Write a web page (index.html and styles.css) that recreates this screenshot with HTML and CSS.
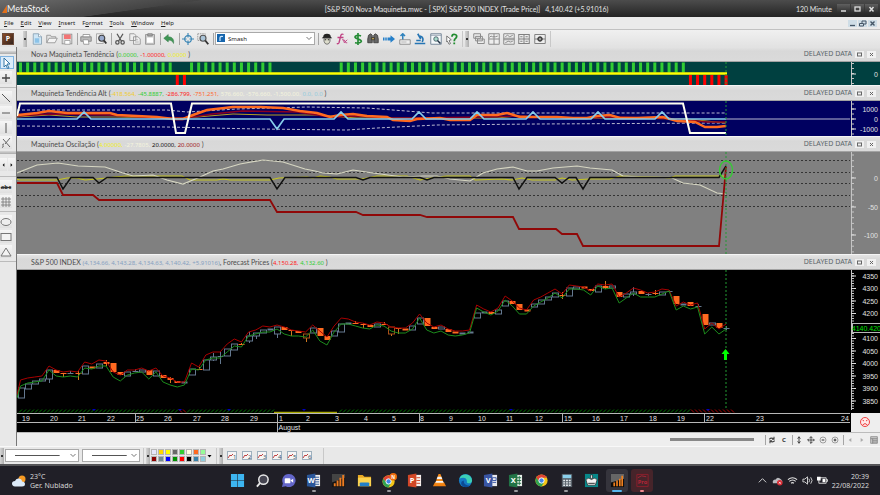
FILE: index.html
```html
<!DOCTYPE html>
<html lang="en">

<head>
    <meta charset="utf-8">
    <title>MetaStock</title>
    <link rel="stylesheet" href="styles.css">
</head>

<body>
    <header class="titlebar">
        <div class="brand">
            <svg width="5" height="8" viewBox="0 0 5 8"><path d="M0 8L5 0V8Z" fill="#e0701c"/></svg>
            <span>MetaStock</span>
        </div>
        <div class="doc-title"><span>[S&amp;P 500 Nova Maquineta.mwc - [.SPX] S&amp;P 500 INDEX (Trade Price)]</span><span>4,140.42 (+5.91016)</span></div>
        <span class="period">120 Minute</span>
        <div class="win-buttons">
            <button aria-label="Minimize"><svg viewBox="0 0 13 8"><path d="M4 6h5" stroke="#ddd" stroke-width="1.5"/></svg></button>
            <button aria-label="Maximize"><svg viewBox="0 0 13 8"><rect x="4" y="2" width="5" height="4" fill="none" stroke="#ddd" stroke-width="1.3"/></svg></button>
            <button aria-label="Close"><svg viewBox="0 0 13 8"><path d="M4.500 2l4 4.500M8.500 2l-4 4.500" stroke="#ddd" stroke-width="1.5"/></svg></button>
        </div>
    </header>

    <nav class="menubar">
        <a href="#"><u>F</u>ile</a>
        <a href="#"><u>E</u>dit</a>
        <a href="#"><u>V</u>iew</a>
        <a href="#"><u>I</u>nsert</a>
        <a href="#">F<u>o</u>rmat</a>
        <a href="#"><u>T</u>ools</a>
        <a href="#"><u>W</u>indow</a>
        <a href="#"><u>H</u>elp</a>
        <div class="mdi-buttons">
            <button aria-label="Minimize chart"><svg viewBox="0 0 9 7"><path d="M2 5.500h5" stroke="#456" stroke-width="1.300"/></svg></button>
            <button aria-label="Restore chart"><svg viewBox="0 0 9 7"><path d="M4 3V1h4v3H6M1.500 3.500h4v2.500h-4z" fill="none" stroke="#456"/></svg></button>
            <button aria-label="Close chart"><svg viewBox="0 0 9 7"><path d="M2.500 1.500l4 4M6.500 1.500l-4 4" stroke="#456" stroke-width="1.400"/></svg></button>
        </div>
    </nav>

    <div class="toolbar">
        <button class="power" aria-label="Power Console">P</button>
        <span class="grip"></span>
        <button aria-label="New"><svg viewBox="0 0 16 16"><path d="M3 1h7l4 4v10H3z" fill="#cfe6f5" stroke="#7d98ab"/><path d="M10 1v4h4" fill="#fff" stroke="#7d98ab"/><path d="M5 7h6v6H5z" fill="#8cc3e8"/></svg></button>
        <button aria-label="Open"><svg viewBox="0 0 16 16"><path d="M1 13V3h5l1 2h6v2" fill="#e5e5e5" stroke="#888"/><path d="M1 13l3-6h11l-3 6z" fill="#f4f4f4" stroke="#888"/></svg></button>
        <button aria-label="Save"><svg viewBox="0 0 16 16"><rect x="1.500" y="1.500" width="13" height="13" fill="#ddd" stroke="#888"/><path d="M4 2h9v6H4z" fill="#f27474"/><path d="M5 10h7v5H5z" fill="#fff" stroke="#999"/></svg></button>
        <span class="sep"></span>
        <button aria-label="Print"><svg viewBox="0 0 16 16"><path d="M1 5h14v6H1z" fill="#bbb" stroke="#777"/><path d="M4 2h9v3H4zM4 9h7l1 6H5z" fill="#fff" stroke="#888"/></svg></button>
        <button aria-label="Print preview"><svg viewBox="0 0 16 16"><path d="M2 1h9v13H2z" fill="#eee" stroke="#999"/><circle cx="9" cy="7" r="4" fill="#9ac" stroke="#444" stroke-width="1.500"/><path d="M12 10l3 4" stroke="#333" stroke-width="2.500"/></svg></button>
        <span class="sep"></span>
        <button aria-label="Cut"><svg viewBox="0 0 16 16" fill="none" stroke="#555" stroke-width="1.700"><path d="M4 1l6 10M12 1L6 11"/><circle cx="4.500" cy="12.500" r="2.200"/><circle cx="11.500" cy="12.500" r="2.200"/></svg></button>
        <button aria-label="Copy"><svg viewBox="0 0 16 16"><path d="M1 1h6l2 2v7H1zM6 5h6l3 3v7H6z" fill="#eee" stroke="#888"/><path d="M8 9h4M8 12h5" stroke="#aaa"/></svg></button>
        <button aria-label="Paste"><svg viewBox="0 0 16 16"><path d="M2 2h12v13H2z" fill="#ccc" stroke="#888"/><path d="M5 1h6v3H5z" fill="#aaa" stroke="#777"/><path d="M4 6h8v7H4z" fill="#fff"/></svg></button>
        <span class="sep"></span>
        <button aria-label="Undo"><svg viewBox="0 0 16 16"><path d="M1 7l6-5v3c6 0 8 4 7 9-2-4-4-5-7-4v2z" fill="#3f9655" stroke="#2d7540" stroke-width=".600"/></svg></button>
        <span class="sep"></span>
        <button aria-label="Crosshair"><svg viewBox="0 0 16 16" fill="none" stroke="#3b86b5" stroke-width="1.500"><circle cx="8" cy="8" r="4.500"/><path d="M8 0v6M8 10v6M0 8h6M10 8h6"/></svg></button>
        <button aria-label="Zoom box"><svg viewBox="0 0 16 16"><path d="M1 1h10v9H1z" fill="none" stroke="#888" stroke-dasharray="2 1"/><circle cx="8" cy="7" r="4" fill="#aac4d8" stroke="#555" stroke-width="1.500"/><path d="M11 10l4 5" stroke="#333" stroke-width="2.500"/></svg></button>
        <span class="sep"></span>
        <div class="combo template">
            <svg class="template-icon" viewBox="0 0 8 8"><rect width="8" height="8" fill="#1766ad"/><path d="M3 7V4q0-2 3-1.500" fill="none" stroke="#cfe8ff" stroke-width="1.200"/></svg>
            <select aria-label="Template"><option>Smash</option></select>
            <svg class="chevron" viewBox="0 0 8 5"><path d="M1.500 1L4 3.500 6.500 1" fill="none" stroke="#777"/></svg>
        </div>
        <span class="sep"></span>
        <div class="tool-group">
            <button aria-label="Expert Advisor"><svg viewBox="0 0 16 16"><path d="M3 5q0-4 5-4t5 4l2 2H1z" fill="#222"/><path d="M4 7h8v4q-1 4-4 4t-4-4z" fill="#ddc" stroke="#555"/><path d="M5 9h2M9 9h2" stroke="#222" stroke-width="1.500"/></svg></button>
            <button aria-label="Indicator Builder"><svg viewBox="0 0 16 16" fill="none" stroke="#bf4283" stroke-width="1.800"><path d="M10 2Q7 0 6 5L4 13q-1 2-3 1M2 6h8"/><path d="M8 9h2l1 4 4-4M15 13h-2l-2-4" stroke-width="1.200"/></svg></button>
            <button aria-label="System Tester"><svg viewBox="0 0 16 16" fill="none" stroke="#248b34" stroke-width="2.200"><path d="M12 4Q8 2 5 4t3 4 4 4-8 1M8 0v16"/></svg></button>
            <button aria-label="Explorer"><svg viewBox="0 0 16 16" fill="#666" stroke="#333"><path d="M2 3l3-2 2 2v10H1V8zM14 3l-3-2-2 2v10h6V8z"/><path d="M6 6h4v3H6z" fill="#b59b50"/></svg></button>
            <button aria-label="Forecaster"><svg viewBox="0 0 16 16"><path d="M0 6h2v4H0zM3 6h2v4H3zM6 6h4V3l6 5-6 5v-3H6z" fill="#2680ca"/></svg></button>
            <button aria-label="Option Scope"><svg viewBox="0 0 16 16"><path d="M5 1v8M2 4l3-3 3 3" fill="none" stroke="#3183bd" stroke-width="2"/><path d="M1 9h14v6H1z" fill="#eee" stroke="#777"/><path d="M3 12h7" stroke="#aaa"/></svg></button>
            <button aria-label="Quote Center"><svg viewBox="0 0 16 16" fill="none" stroke="#2675b4" stroke-width="2.200"><path d="M5 1l4 7M8 4q6 2 3 8M1 14h14M3 10h6"/></svg></button>
            <button aria-label="Chart inspector"><svg viewBox="0 0 16 16"><path d="M1 1h14v14H1z" fill="#f5f9fb" stroke="#789" stroke-width="1.300"/><path d="M1 3h14" stroke="#789"/><circle cx="8" cy="8" r="3" fill="#adc" stroke="#345"/><path d="M10 10l4 4" stroke="#234" stroke-width="2"/></svg></button>
            <button aria-label="Context help"><svg viewBox="0 0 16 16"><path d="M1 4l6 5-3 1 2 4-2 1-2-4-1 1z" fill="#fff" stroke="#555"/><path d="M8 5q0-4 4-3t1 5q-2 1-2 4M11 12.500v2.500" fill="none" stroke="#218c30" stroke-width="2.400"/></svg></button>
        </div>
        <span class="sep wide"></span>
        <span class="grip"></span>
        <div class="tool-group layouts">
            <button aria-label="Cascade"><svg viewBox="0 0 16 16" fill="#eee" stroke="#8a8a8a" stroke-width="1.300"><path d="M1 1h9v6H1zM3.500 4.500h9v6h-9zM6 8h9v6H6z"/></svg></button>
            <button aria-label="Tile columns"><svg viewBox="0 0 16 16" fill="#eee" stroke="#8a8a8a" stroke-width="1.300"><path d="M1 1h14v14H1zM8 1v14M1 8h14M2 6l2-2 2 1 4 0 3-1"/></svg></button>
            <button aria-label="Tile rows"><svg viewBox="0 0 16 16" fill="#eee" stroke="#8a8a8a" stroke-width="1.300"><path d="M1 1h14v14H1zM1 7h14M1 9h14M3 5l3-2 3 2 4-2M3 13l4-2 3 1 3-1"/></svg></button>
            <button aria-label="Stack"><svg viewBox="0 0 16 16" fill="#eee" stroke="#808080" stroke-width="1.400"><path d="M1 2h14v12H1zM8 2v12M1 8h14M3 5h3M10 5h3M3 11h3M10 11h3"/></svg></button>
            <button aria-label="Layout options"><svg viewBox="0 0 16 16" fill="#eee" stroke="#808080" stroke-width="1.300"><path d="M1 2h14v12H1zM1 8h14"/><circle cx="8" cy="8" r="3" fill="#555" stroke="#333"/><circle cx="8" cy="8" r="1" fill="#fff" stroke="none"/></svg></button>
        </div>
        <span class="sep wide"></span>
    </div>

    <div class="workspace">
        <aside class="tools">
            <span class="hgrip"></span>
            <button class="selected" aria-label="Pointer"><svg viewBox="0 0 12 12"><path d="M3 1l6 6H6l2 4-1.500.500L5 8 3 10z" fill="#fff" stroke="#3476a5"/></svg></button>
            <button aria-label="Crosshair pointer"><svg viewBox="0 0 12 12"><path d="M6 2v8M2 6h8" stroke="#444" stroke-width="1.300"/></svg></button>
            <span class="hsep"></span>
            <button aria-label="Trendline"><svg viewBox="0 0 12 12"><path d="M2 2l8 8" stroke="#555"/></svg></button>
            <button aria-label="Horizontal line"><svg viewBox="0 0 12 12"><path d="M2 6h8" stroke="#555"/></svg></button>
            <button aria-label="Vertical line"><svg viewBox="0 0 12 12"><path d="M6 1v10" stroke="#555"/></svg></button>
            <button aria-label="Speed line"><svg viewBox="0 0 12 12"><path d="M3 2l7 8M10 1L5 7M4 7q-2 0-1 1.500t-1 2" fill="none" stroke="#666"/></svg></button>
            <span class="hgrip"></span>
            <div class="pager">
                <button aria-label="Previous"><svg viewBox="0 0 8 12"><path d="M5 4v4L3 6z"/></svg></button>
                <button aria-label="Next"><svg viewBox="0 0 8 12"><path d="M3 4v4l2-2z"/></svg></button>
            </div>
            <span class="hsep"></span>
            <button class="abc" aria-label="Text">abc</button>
            <button aria-label="Grid"><svg viewBox="0 0 12 12"><path d="M1 3h10M1 6h10M1 9h10M3 1v10M6 1v10M9 1v10" stroke="#777" stroke-width=".800"/></svg></button>
            <span class="hsep"></span>
            <button aria-label="Ellipse"><svg viewBox="0 0 12 12"><ellipse cx="6" cy="6" rx="5" ry="3.500" fill="#eee" stroke="#777"/></svg></button>
            <button aria-label="Rectangle"><svg viewBox="0 0 12 12"><rect x="1" y="2.500" width="10" height="7" fill="#f3f3f3" stroke="#777"/></svg></button>
            <button aria-label="Triangle"><svg viewBox="0 0 12 12"><path d="M6 2l5 8H1z" fill="#f3f3f3" stroke="#777"/></svg></button>
            <span class="hsep"></span>
        </aside>

        <main class="panes">
            <section class="pane">
                <div class="pane-head">
                    <h2>Nova Maquineta Tendência (<b class="lime">0.0000,</b> <b class="red">-1.00000,</b> <b class="yellow">0.0000</b> )</h2>
                    <span>DELAYED DATA</span>
                    <button aria-label="Maximize pane"><svg viewBox="0 0 9 7"><rect x="2.500" y="2" width="4" height="3" fill="none" stroke="#666"/></svg></button>
                    <button aria-label="Close pane"><svg viewBox="0 0 9 7"><path d="M3 2l3 3M6 2L3 5" stroke="#666"/></svg></button>
                </div>
                <div class="pane-body trend"><svg class="plot" id="trend"></svg><svg class="axis" id="trend-axis"></svg></div>
            </section>
            <section class="pane">
                <div class="pane-head">
                    <h2>Maquineta Tendência Alt (<b class="gold">-418.564,</b> <b class="lime">-45.8887,</b> <b class="red">-286.799,</b> <b class="orange">-751.251,</b> <b class="cream">576.660, -576.660, -1,500.00,</b> <b class="sky">0.0, 0.0</b> )</h2>
                    <span>DELAYED DATA</span>
                    <button aria-label="Maximize pane"><svg viewBox="0 0 9 7"><rect x="2.500" y="2" width="4" height="3" fill="none" stroke="#666"/></svg></button>
                    <button aria-label="Close pane"><svg viewBox="0 0 9 7"><path d="M3 2l3 3M6 2L3 5" stroke="#666"/></svg></button>
                </div>
                <div class="pane-body alt"><svg class="plot" id="alt"></svg><svg class="axis" id="alt-axis"></svg></div>
            </section>
            <section class="pane">
                <div class="pane-head">
                    <h2>Maquineta Oscilação (<b class="yellow">4.00000,</b> <b class="cream">-27.7805,</b> <b class="black">20.0000,</b> <b class="maroon">20.0000</b> )</h2>
                    <span>DELAYED DATA</span>
                    <button aria-label="Maximize pane"><svg viewBox="0 0 9 7"><rect x="2.500" y="2" width="4" height="3" fill="none" stroke="#666"/></svg></button>
                    <button aria-label="Close pane"><svg viewBox="0 0 9 7"><path d="M3 2l3 3M6 2L3 5" stroke="#666"/></svg></button>
                </div>
                <div class="pane-body osc"><svg class="plot" id="osc"></svg><svg class="axis" id="osc-axis"></svg></div>
            </section>
            <section class="pane">
                <div class="pane-head">
                    <h2>S&amp;P 500 INDEX <b class="steel">(4,134.66, 4,143.28, 4,134.63, 4,140.42, +5.91016)</b>, Forecast Prices (<b class="red">4,150.28,</b> <b class="lime">4,132.60</b> )</h2>
                    <span>DELAYED DATA</span>
                    <button aria-label="Maximize pane"><svg viewBox="0 0 9 7"><rect x="2.500" y="2" width="4" height="3" fill="none" stroke="#666"/></svg></button>
                    <button aria-label="Close pane"><svg viewBox="0 0 9 7"><path d="M3 2l3 3M6 2L3 5" stroke="#666"/></svg></button>
                </div>
                <div class="pane-body price"><svg class="plot" id="price"></svg><svg class="axis" id="price-axis"></svg></div>
            </section>
            <div class="scroll-row">
                <span class="thumb"></span>
                <span class="sep"></span>
                <button aria-label="Refresh"><svg viewBox="0 0 12 12" fill="none" stroke="#444" stroke-width="1.600"><path d="M2 5q2-3 7-1M10 7q-2 3-7 1"/><path d="M9 1v4H6M3 11V7h3"/></svg></button>
                <button aria-label="Reset">C</button>
                <span class="sep"></span>
                <button aria-label="Vertical scale"><svg viewBox="0 0 12 12" fill="none" stroke="#444" stroke-width="1.500"><path d="M6 2v8M4 4l2-3 2 3M4 8l2 3 2-3"/></svg></button>
                <button aria-label="Move"><svg viewBox="0 0 12 12" fill="none" stroke="#444" stroke-width="1.400"><path d="M6 1v10M1 6h10M4 3l2-2 2 2M4 9l2 2 2-2M3 4L1 6l2 2M9 4l2 2-2 2"/></svg></button>
                <button aria-label="Zoom out"><svg viewBox="0 0 12 12" fill="none" stroke="#777"><circle cx="6" cy="6" r="4.500"/><path d="M4 6h4" stroke="#333" stroke-width="1.500"/></svg></button>
                <button aria-label="Zoom in"><svg viewBox="0 0 12 12" fill="none" stroke="#777"><circle cx="6" cy="6" r="4.500"/><path d="M4 6h4M6 4v4" stroke="#333" stroke-width="1.500"/></svg></button>
                <span class="sep"></span>
                <button aria-label="Back"><svg viewBox="0 0 12 12"><path d="M8 3v6L4 6z" fill="#aaa"/></svg></button>
                <button aria-label="Forward"><svg viewBox="0 0 12 12"><path d="M4 3v6l4-3z" fill="#aaa"/></svg></button>
                <button aria-label="Data window"><svg viewBox="0 0 12 12"><path d="M1 1h10v10H1zM1 4h10M4 4v7M4 6.500h7M4 9h7" fill="#ccc" stroke="#777"/></svg></button>
            </div>
        </main>
    </div>

    <div class="bottombar">
        <span class="grip"></span>
        <div class="combo line-style"><select aria-label="Line style"><option></option></select><svg class="chevron" viewBox="0 0 8 5"><path d="M1.500 1L4 3.500 6.500 1" fill="none" stroke="#777"/></svg></div>
        <div class="combo line-weight"><select aria-label="Line weight"><option></option></select><svg class="chevron" viewBox="0 0 8 5"><path d="M1.500 1L4 3.500 6.500 1" fill="none" stroke="#777"/></svg></div>
        <span class="sep wide"></span>
        <span class="grip"></span>
        <div class="palette" id="palette"></div>
        <button class="more" aria-label="More colors"><svg viewBox="0 0 6 6"><path d="M1 2h4L3 4.500z"/></svg></button>
        <span class="sep wide"></span>
        <span class="grip"></span>
        <div class="templates" id="templates"></div>
        <span class="sep wide"></span>
    </div>

    <footer class="taskbar">
        <div class="weather">
            <svg width="14" height="12" viewBox="0 0 14 12"><circle cx="10" cy="4" r="3.500" fill="#f59a23"/><path d="M3 11.500q-3-.500-3-3t3-2.500q1-3 4-2.500t3 3q3 0 3 2.500t-3 2.500z" fill="#dceaf8"/></svg>
            <div><p>23°C</p><p>Ger. Nublado</p></div>
        </div>
        <div class="apps">
            <button aria-label="Start"><svg viewBox="0 0 16 16" fill="#3db5f0"><path d="M1 1h6.700v6.700H1zM8.300 1H15v6.700H8.300zM1 8.300h6.700V15H1zM8.300 8.300H15V15H8.300z"/></svg></button>
            <button aria-label="Search"><svg viewBox="0 0 16 16"><circle cx="9" cy="7" r="5" fill="#454450" stroke="#e8e8e8" stroke-width="1.600"/><path d="M5.500 10.500L2 14.500" stroke="#e8e8e8" stroke-width="2"/></svg></button>
            <button aria-label="Chat"><svg viewBox="0 0 16 16"><path d="M8 1a7 7 0 1 1-3 13l-4 1 1-4A7 7 0 0 1 8 1z" fill="#6366c9"/><rect x="4" y="5.500" width="6" height="5.500" rx="1" fill="#fff"/><path d="M10 8l3-2v4.500z" fill="#fff"/></svg></button>
            <button class="running" aria-label="Word"><svg viewBox="0 0 16 16"><rect x="7" y="2" width="8" height="12" fill="#eee"/><path d="M9 4.500h5M9 7h5M9 9.500h5M9 12h5" stroke="#2b579a"/><path d="M1 2l9-1.500v15L1 14z" fill="#2b579a"/><text x="5.500" y="11">W</text></svg></button>
            <button aria-label="MetaStock"><svg viewBox="0 0 16 16"><rect x="1" y="1" width="14" height="14" fill="#151515"/><path d="M1 1h14v4L1 10z" fill="#444"/><path d="M4 14v-3M7 14V8M10 14V5M13 14V2" stroke="#ee7b20" stroke-width="2"/></svg></button>
            <button aria-label="Explorer"><svg viewBox="0 0 16 16"><path d="M1 2h5l2 2h7v10H1z" fill="#e8a823"/><path d="M1 5h14v9H1z" fill="#fbd24f"/><path d="M3 14v-3q0-1 1-1h8q1 0 1 1v3z" fill="#2380c8"/></svg></button>
            <button class="running" aria-label="Chrome profile"><svg viewBox="0 0 16 16"><circle cx="7" cy="9" r="6.500" fill="#f3c518"/><path d="M1.400 6A6.500 6.500 0 0 1 12.700 6H7L5 11z" fill="#de4335"/><path d="M1.400 6A6.500 6.500 0 0 0 7 15.500L9.500 11 5 10.500z" fill="#31a352"/><circle cx="7" cy="9" r="2.800" fill="#4084e8" stroke="#fff"/><circle cx="12" cy="4" r="4" fill="#ee6c0d"/><text class="badge-letter" x="12" y="6">N</text></svg></button>
            <button aria-label="PowerPoint"><svg viewBox="0 0 16 16"><rect x="7" y="2" width="8" height="12" fill="#f5f0ee"/><path d="M10 5h4M10 8h4M10 11h4" stroke="#d24726"/><path d="M1 2l9-1.500v15L1 14z" fill="#d24726"/><text x="5.500" y="11">P</text></svg></button>
            <button aria-label="VLC"><svg viewBox="0 0 16 16"><path d="M1 14l2-4h10l2 4z" fill="#f08010"/><path d="M7 1h2l4 11H3z" fill="#f58a18"/><path d="M6 4h4l1 2.500H5zM4.400 8.500h7.200l.900 2H3.500z" fill="#f4f4f4"/></svg></button>
            <button aria-label="Edge"><svg viewBox="0 0 16 16"><circle cx="8" cy="8" r="7" fill="#1479c4"/><path d="M1.500 6A7 7 0 0 1 15 8q0 3-3.500 3-2.500 0-2-2.500Q9 5 5.500 5q-2.500 0-4 1z" fill="#3ccfb5"/><path d="M6 8q0 5 6.500 5.500Q8 17 4 13q-2-4 2-5z" fill="#0c4b95"/></svg></button>
            <button aria-label="Visio"><svg viewBox="0 0 16 16"><rect x="7" y="2" width="8" height="12" fill="#e8e8ee"/><path d="M10 5h4v3h-4zM10 10h4" fill="none" stroke="#3955a3"/><path d="M1 2l9-1.500v15L1 14z" fill="#3955a3"/><text x="5.500" y="11">V</text></svg></button>
            <button class="running" aria-label="Excel"><svg viewBox="0 0 16 16"><rect x="7" y="2" width="8" height="12" fill="#e8f0ea"/><path d="M9 5h5M9 8h5M9 11h5M12 3v10" stroke="#217346"/><path d="M1 2l9-1.500v15L1 14z" fill="#217346"/><text x="5.500" y="11">X</text></svg></button>
            <button aria-label="Chrome"><svg viewBox="0 0 16 16"><circle cx="8" cy="8" r="6.500" fill="#f3c518"/><path d="M2.400 5A6.500 6.500 0 0 1 13.700 5H8L6 10z" fill="#de4335"/><path d="M2.400 5A6.500 6.500 0 0 0 8 14.500L10.500 10 6 9.500z" fill="#31a352"/><circle cx="8" cy="8" r="2.800" fill="#4084e8" stroke="#fff"/></svg></button>
            <button class="running" aria-label="Calculator"><svg viewBox="0 0 16 16"><rect x="3" y="1" width="11" height="14" fill="#59626b"/><path d="M4 2h9v3.500H4z" fill="#8bd0ec"/><path d="M4.500 8h8M4.500 10.500h8M4.500 13h8" stroke="#e4e9ed" stroke-width="1.500" stroke-dasharray="2 1"/></svg></button>
            <button aria-label="Chess"><svg viewBox="0 0 16 16"><rect x="1" y="1" width="14" height="14" fill="#078789"/><path d="M4 13l-2-6Q5 4 8 7q3-3 6 0l-2 6zM7 2h2v4H7z" fill="#f2f2f2" stroke="#222" stroke-width=".700"/><path d="M4.500 11h7" stroke="#222"/></svg></button>
            <button class="active" aria-label="MetaStock chart"><svg viewBox="0 0 16 16"><rect x="1" y="1" width="14" height="14" fill="#0c0c0c"/><path d="M1 1h14v5L1 10z" fill="#666"/><path d="M4.500 14v-4M7.500 14V8M10.500 14V6M13 14V3" stroke="#f0801e" stroke-width="1.800"/></svg></button>
            <button class="alert" aria-label="Profit Pro"><svg viewBox="0 0 16 16"><path d="M2 1.500h12v13H2z" fill="none" stroke="#8d1f2c"/><path d="M3 5l4-2 5 1" fill="none" stroke="#a52535"/><text class="pro" x="8" y="12">Pro</text></svg></button>
        </div>
        <div class="tray">
            <svg viewBox="0 0 12 12"><path d="M2 8l4-4 4 4" fill="none" stroke="#ddd"/></svg>
            <svg viewBox="0 0 12 12"><path d="M1 9q-1-4 3-4 2-4 6 0 2 1 1 4z" fill="#b9b9bd"/><circle cx="8.500" cy="8.500" r="3" fill="#d92c35"/><path d="M7.500 7.500l2 2M9.500 7.500l-2 2" stroke="#fff" stroke-width=".800"/></svg>
            <svg viewBox="0 0 12 12" fill="none" stroke="#e5e5e5" stroke-width="1.200"><path d="M1 5q5-4 10 0M2.500 7q3.500-3 7 0M4.500 9q1.500-1.500 3 0"/></svg>
            <svg viewBox="0 0 12 12" fill="none" stroke="#ddd"><path d="M1 4.500h2l3-2.500v8L3 7.500H1zM7.500 4q1.500 2 0 4M9.500 2.500q3 3.500 0 7"/></svg>
            <svg viewBox="0 0 12 12"><path d="M2 3h8v6H2zM10 5h1.500v2H10" fill="none" stroke="#ddd"/><path d="M6 4h3v4H6zM0 2h4v4H0z" fill="#fff"/></svg>
            <div class="clock"><p>20:39</p><p>22/08/2022</p></div>
        </div>
    </footer>

    <script src="charts.js"></script>
</body>

</html>
```

FILE: styles.css
```css
* {
    box-sizing: border-box;
}

body {
    margin: 0;
    min-height: 100vh;
    display: flex;
    flex-direction: column;
    background-color: #eeeeee;
    font-family: "Noto Sans", "Open Sans", sans-serif;
    font-size: 6px;
    line-height: 8px;
    color: #333333;
}

p,
h2 {
    margin: 0;
}

button {
    font: inherit;
    color: inherit;
    border: none;
    padding: 0;
    background: none;
    display: flex;
    align-items: center;
    justify-content: center;
    cursor: pointer;
}

svg {
    display: block;
}

/* title and menu */
.titlebar {
    display: flex;
    align-items: center;
    height: 17px;
    padding-right: 2px;
    background: linear-gradient(#4c4c4c, #383838 50%, #242424);
    font-family: Lato, "Noto Sans", sans-serif;
    font-size: 7px;
    color: #e2e2e2;
}

.brand {
    width: 37%;
    height: 100%;
    padding-left: 2px;
    display: flex;
    align-items: center;
    font-size: 9px;
    line-height: 12px;
    color: #f4f4f4;
    background: linear-gradient(172deg, #6b6b6b, #444444 45%, transparent 46%);
}

.doc-title {
    flex: 1;
    display: flex;
    gap: 5px;
    white-space: nowrap;
}

.period {
    margin-right: 5px;
}

.win-buttons,
.mdi-buttons {
    display: flex;
    gap: 1px;
}

.win-buttons button {
    width: 13px;
    height: 9px;
    background: linear-gradient(#606060, #2c2c2c);
}

.win-buttons svg {
    width: 13px;
    height: 8px;
}

.menubar {
    display: flex;
    align-items: center;
    gap: 7px;
    height: 13px;
    padding: 0 3px 0 4px;
    background-color: #ebebeb;
    border-bottom: 1px solid #c2c2c2;
}

.menubar a {
    color: #222222;
    text-decoration: none;
}

.mdi-buttons {
    margin-left: auto;
}

.mdi-buttons button {
    width: 9px;
    height: 7px;
    background-color: #cfdde6;
}

.mdi-buttons svg,
.pane-head svg {
    width: 9px;
    height: 7px;
}

/* toolbar */
.toolbar {
    display: flex;
    align-items: center;
    height: 17px;
    padding-left: 2px;
    background: linear-gradient(#f0f0f0, #e2e2e2);
}

.toolbar button {
    width: 15px;
    height: 15px;
    flex: none;
}

.toolbar button svg {
    width: 12px;
    height: 12px;
}

.toolbar .power {
    width: 12px;
    height: 12px;
    margin-right: 9px;
    background: linear-gradient(135deg, #8a4a25, #33241e);
    border: 1px solid #6b4a3a;
    color: #ffffff;
    font-weight: bold;
    font-size: 7px;
}

.grip {
    width: 4px;
    height: 16px;
    flex: none;
    margin-right: 2px;
    background: radial-gradient(circle, #333333 1px, transparent 1px) no-repeat center / 4px 4px, linear-gradient(90deg, #d5d5d5, #adadad);
}

.sep {
    width: 1px;
    height: 12px;
    flex: none;
    margin-left: 3px;
    background-color: #a5a5a5;
}

.sep.wide {
    height: 16px;
    margin-right: 2px;
    background-color: #c8c8c8;
}

.combo {
    position: relative;
    height: 13px;
    flex: none;
}

.combo select {
    appearance: none;
    display: block;
    width: 100%;
    height: 100%;
    margin: 0;
    padding: 0 0 0 12px;
    border: 1px solid #a9a9a9;
    border-radius: 0;
    background-color: #ffffff;
    font: inherit;
    color: #222222;
}

.combo .chevron {
    position: absolute;
    right: 2px;
    top: 4px;
    width: 8px;
    height: 5px;
}

.template {
    width: 100px;
    margin-left: 1px;
}

.template-icon {
    position: absolute;
    left: 2px;
    top: 2px;
    width: 8px;
    height: 8px;
}

.tool-group {
    width: 140px;
    display: flex;
    justify-content: space-between;
}

.layouts {
    width: 76px;
}

/* drawing tools on the left */
.workspace {
    display: flex;
    flex: 1;
}

.tools {
    width: 17px;
    flex: none;
    display: flex;
    flex-direction: column;
    gap: 2px;
    padding-top: 4px;
    background-color: #e8e8e8;
    border-right: 1px solid #777777;
}

.tools button {
    width: 12px;
    height: 13px;
    background: linear-gradient(#f6f6f6, #e0e0e0);
}

.tools svg {
    width: 12px;
    height: 12px;
}

.tools button.selected {
    width: 14px;
    border: 1px solid #80b3e0;
    background: #dcecfa;
}

.hgrip {
    height: 3px;
    background: linear-gradient(#d8d8d8, #aaaaaa);
}

.hsep {
    height: 1px;
    margin: 1px 0;
    background-color: #bbbbbb;
}

.pager {
    display: flex;
    align-items: center;
    gap: 1px;
    height: 17px;
}

.tools .pager button {
    width: 7px;
}

.tools .pager svg {
    width: 8px;
}

.tools .abc {
    font-weight: bold;
    text-decoration: line-through;
}

/* chart panes */
.panes {
    flex: 1;
    min-width: 0;
}

.pane + .pane {
    border-top: 1px solid #f4f4f4;
}

.pane-head {
    display: flex;
    align-items: center;
    gap: 3px;
    height: 15px;
    padding: 0 4px 0 14px;
    background: linear-gradient(#e3e3e3, #d8d8d8 30%, #dadada);
    border-bottom: 1px solid #a2a2a2;
    font-size: 7px;
    color: #5c666c;
}

.pane-head h2 {
    flex: 1;
    font-family: Lato, "Noto Sans", sans-serif;
    font-size: 7px;
    font-weight: normal;
    color: #4c4c4c;
}

.pane-head b {
    font-family: "Noto Sans", sans-serif;
    font-size: 6px;
    font-weight: normal;
}

.pane-head button {
    width: 9px;
    height: 7px;
    background-color: #f0f0f0;
}

.lime { color: #32cd32; }
.red { color: #ff1c1c; }
.yellow { color: #f0ee20; }
.gold { color: #f0cc30; }
.orange { color: #ff6a30; }
.cream { color: #f4f4dd; }
.sky { color: #96ccde; }
.black { color: #111111; }
.maroon { color: #a01818; }
.steel { color: #85a0c0; }

.pane-body {
    display: flex;
}

.plot {
    flex: 1;
    min-width: 0;
    height: 100%;
}

.axis {
    width: 30px;
    height: 100%;
    flex: none;
}

.plot text,
.axis text {
    font-family: "Liberation Sans", Arial, sans-serif;
    font-size: 7px;
    fill: #e0e0e0;
}

.axis text {
    text-anchor: end;
}

.axis .last {
    fill: #00e000;
}

.trend {
    height: 23px;
    background-color: #004040;
}

.alt {
    height: 35px;
    background-color: #000060;
}

.osc {
    height: 102px;
    background-color: #808080;
}

.price {
    height: 162px;
    background-color: #000000;
}

.scroll-row {
    display: flex;
    align-items: center;
    justify-content: flex-end;
    height: 14px;
    background-color: #eeeeee;
    border-top: 1px solid #bbbbbb;
}

.scroll-row button {
    width: 12px;
    height: 12px;
    font-weight: bold;
}

.scroll-row svg {
    width: 8px;
    height: 8px;
}

.scroll-row .sep {
    height: 10px;
    margin-left: 2px;
}

.thumb {
    width: 84px;
    height: 3px;
    margin-right: 9px;
    background-color: #888888;
}

/* bottom toolbar */
.bottombar {
    display: flex;
    align-items: center;
    height: 18px;
    background-color: #e8e8e8;
    border-top: 1px solid #f8f8f8;
}

.bottombar .grip {
    margin-right: 1px;
}

.line-style {
    width: 74px;
    margin-right: 3px;
}

.line-weight {
    width: 58px;
}

.line-style select,
.line-weight select {
    padding: 0;
    background: linear-gradient(#555555, #555555) no-repeat 9px 5px / 62% 1px, #ffffff;
}

.palette {
    display: grid;
    grid-template-columns: repeat(8, 6px);
    gap: 1px;
}

.palette button {
    width: 6px;
    height: 6px;
    border: 1px solid #b5b5b5;
}

.more svg {
    width: 7px;
    height: 6px;
}

.templates {
    display: flex;
    gap: 3px;
    padding: 0 7px 0 2px;
}

.templates button {
    width: 12px;
    height: 10px;
}

.templates svg {
    width: 11px;
    height: 9px;
}

.templates text {
    font-size: 6px;
    fill: #445566;
}

/* taskbar */
.taskbar {
    display: grid;
    grid-template-columns: 1fr 430px 1fr;
    align-items: center;
    height: 31px;
    border-top: 2px solid #555558;
    background-color: #201f27;
    color: #d8d8d8;
    font-size: 7px;
    line-height: 9px;
}

.weather {
    display: flex;
    align-items: center;
    gap: 4px;
    padding-left: 12px;
}

.apps {
    display: grid;
    grid-template-columns: repeat(17, 1fr);
    justify-items: center;
}

.apps button {
    position: relative;
    width: 22px;
    height: 23px;
    border-radius: 3px;
}

.apps svg {
    width: 15px;
    height: 15px;
}

.apps text {
    font-size: 8px;
    font-weight: bold;
    fill: #ffffff;
    text-anchor: middle;
}

.apps .badge-letter {
    font-size: 5px;
}

.apps .pro {
    font-size: 6px;
    fill: #b42438;
}

.apps .active {
    background-color: #35343c;
}

.apps .alert {
    background-color: #46242a;
}

.apps .running::after,
.apps .active::after,
.apps .alert::after {
    content: "";
    position: absolute;
    bottom: 0;
    left: 9px;
    width: 4px;
    height: 2px;
    border-radius: 1px;
    background-color: #9b9b9f;
}

.apps .active::after {
    left: 6px;
    width: 10px;
    background-color: #56b7ee;
}

.apps .alert::after {
    background-color: #f08a90;
}

.tray {
    display: flex;
    align-items: center;
    justify-content: flex-end;
    gap: 4px;
    padding-right: 11px;
}

.tray svg {
    width: 11px;
    height: 11px;
}

.clock {
    text-align: right;
}
```

FILE: charts.js
```js
const NS = 'http://www.w3.org/2000/svg';
const BARS = 100;
const LAST_X = 709;

const barX = (i) => 3.5 + i * 7.127;

function add(parent, name, attrs, text) {
    const node = document.createElementNS(NS, name);
    for (const key in attrs) node.setAttribute(key, attrs[key]);
    if (text !== undefined) node.textContent = text;
    parent.appendChild(node);
    return node;
}

function line(parent, points, color, width, dash) {
    add(parent, 'polyline', {
        points, fill: 'none', stroke: color, 'stroke-width': width || 1, 'stroke-dasharray': dash || 'none',
    });
}

function hline(parent, y, color, dash) {
    add(parent, 'line', { x1: 0, x2: '100%', y1: y, y2: y, stroke: color, 'stroke-dasharray': dash || 'none' });
}

function cursorLine(parent, bottom) {
    line(parent, `${LAST_X},0 ${LAST_X},${bottom}`, '#229a32', 1, '2 2');
}

// ticks: every `step` px from `start`; labels: [text, y]
function axis(id, height, start, step, labels) {
    const svg = document.getElementById(id);
    line(svg, `1.5,0 1.5,${height}`, '#c4c4c4');
    for (let y = start; y < height; y += step) line(svg, `1,${y} 4,${y}`, '#c4c4c4');
    labels.forEach(([text, y]) => {
        line(svg, `1,${y} 6,${y}`, '#dddddd');
        add(svg, 'text', { x: 28, y: y + 2.5 }, text);
    });
    return svg;
}

// trend bars
const trend = document.getElementById('trend');
for (let i = 0; i < BARS; i++) {
    const down = i === 22 || i === 23 || i > 93;
    if (i > 35 && i < 45) continue;
    add(trend, 'rect', {
        x: barX(i) - 1.5, y: down ? 13 : 0.5, width: 3, height: 10, fill: down ? '#ff0000' : '#32cd32',
    });
}
line(trend, `0,11.5 ${LAST_X + 1},11.5`, '#ffff00', 2.5);
cursorLine(trend, 23);
axis('trend-axis', 23, 1.5, 5, [['0', 12]]);

// alternative trend
const alt = document.getElementById('alt');
line(alt, `0,9 150,9 170,11 220,8 290,6 350,7 415,12 560,12 ${LAST_X},12`, '#b9b9cf', 1, '3 2');
line(alt, `0,25 150,26 240,28 330,29 360,27 420,24 520,23 ${LAST_X},22`, '#b9b9cf', 1, '3 2');
line(alt, '0,16 32,14 60,16 100,16 156,17 180,16 216,13 250,14 300,14 340,17 480,17 500,15 560,17 600,17 670,18 709,22', '#b5a020');
line(alt, '0,15 32,13 90,14 140,17 170,17 195,13 225,10 280,11 300,14 313,16 340,15 370,17 400,17 470,16 500,15 560,17 600,16 660,18 690,21 709,21', '#8b0020', 1.5);
line(alt, '1,14 20,12 32,10 50,12 93,12 100,14 140,16 156,18 166,18 176,14 190,9 216,6 243,6 266,7 283,10 300,12 313,16 323,14 336,13 350,15 370,16 376,19 393,20 400,18 423,17 433,19 453,19 460,14 480,14 490,12 503,16 540,16 556,17 570,17 580,15 593,14 603,17 620,17 646,16 660,20 678,21 688,26 700,26 709,25', '#ff6a20', 2.5);
add(alt, 'line', { x1: LAST_X, x2: '100%', y1: 18, y2: 18, stroke: '#b8b8d0' });
let signal = '0,18';
[[67, 11], [260, 28], [324, 11], [402, 11], [460, 11], [516, 11], [581, 11], [645, 11]].forEach(([x, y]) => {
    signal += ` ${x - 7},18 ${x},${y} ${x + 7},18`;
});
line(alt, `${signal} ${LAST_X},18`, '#87ceeb', 1.7);
line(alt, '0,15 3,2.5 154,2.5 159,32 168,32 175,2.5 666,2.5 673,32 709,32', '#fffff0', 2);
cursorLine(alt, 35);
axis('alt-axis', 35, 3, 5, [['1000', 8], ['0', 18], ['-1000', 28]]);

// oscillator
const osc = document.getElementById('osc');
[8.5, 20.5, 31.5, 43.5, 54.5].forEach((y) => hline(osc, y, '#333333', '2 2'));
line(osc, '0,27 3,28 40,28 50,26 60,26 68,28 80,27 90,26 97,25 110,24 150,24 165,24 173,28 200,28 206,27 213,28 253,28 262,26 290,25 296,26 303,24 313,25 320,27 345,27 360,24 390,24 403,28 420,25 430,24 453,24 458,28 485,27 495,28 505,26 515,28 538,28 545,26 555,28 572,27 583,27 593,27 603,24 640,25 653,26 658,24 709,24', '#c5c522', 1.2);
line(osc, '0,21 20,13 41,11 61,14 88,15 106,21 116,24 136,23 150,28 166,32 183,25 196,19 206,17 223,12 246,8 266,10 288,17 298,19 306,21 320,22 336,18 356,21 386,25 406,24 420,24 433,27 453,29 466,21 480,17 496,15 510,19 520,19 536,16 560,14 573,16 595,18 606,24 623,25 653,25 666,31 683,33 700,41 709,42', '#d6d6c2', 1.2);
line(osc, '0,25.5 40,25.5 46,37 54,25.5 76,25.5 82,31 90,25.5 253,25.5 260,37 268,25.5 339,25.5 346,28 353,25.5 403,25.5 410,28 417,25.5 496,25.5 502,37 510,25.5 538,25.5 545,31 552,25.5 559,25.5 566,37 573,25.5 702,25.5 709,14', '#111111', 1.5);
line(osc, '0,31 40,31 46,43 76,43 82,48 253,48 260,60 339,60 346,63 403,63 410,65 496,65 502,77 539,77 545,82 560,82 566,94 702,94 709,15', '#900808', 1.8);
cursorLine(osc, 102);
add(osc, 'ellipse', { cx: LAST_X, cy: 18, rx: 6.5, ry: 9, fill: 'none', stroke: '#32cd32', 'stroke-width': 1.3 });
axis('osc-axis', 102, 3, 5.7, [['0', 26], ['-50', 55], ['-100', 83]]);

// candles: top, bottom of the body, colour (u = up, d = down, h = hollow down), optional high and low
const candles = [
    [118, 128, 'u'], [114, 119, 'u'], [111, 114, 'u'], [109, 111, 'u'], [100, 109, 'u', 100, 113],
    [100, 103, 'd'], [103, 103, 'd', 103, 107], [103, 103, 'u', 101, 104], [103, 103, 'd', 101, 110], [96, 104, 'u'],
    [97, 98, 'd'], [94, 98, 'u'], [92, 94, 'd', 90, 96], [93, 102, 'd'], [102, 105, 'd'],
    [102, 106, 'u'], [101, 101, 'u', 99, 102], [100, 102, 'u'], [100, 105, 'd'], [101, 106, 'u'],
    [105, 108, 'd'], [108, 110, 'd', 107, 113], [111, 113, 'd'], [112, 113, 'u'], [99, 105, 'u'],
    [99, 99, 'd', 97, 100], [90, 100, 'u'], [87, 90, 'u', 83, 91], [86, 86, 'u', 82, 94], [79, 86, 'u'],
    [74, 80, 'u'], [74, 74, 'd', 73, 75], [66, 71, 'u', 62, 73], [63, 66, 'u', 63, 69], [60, 63, 'u'],
    [59, 60, 'u'], [57, 64, 'u', 57, 68], [57, 60, 'd'], [60, 60, 'd', 60, 66], [61, 63, 'd'],
    [64, 68, 'h', 64, 72], [58, 63, 'u'], [58, 66, 'd'], [66, 70, 'd'], [61, 66, 'u'],
    [54, 62, 'u'], [53, 54, 'u'], [53, 53, 'd', 51, 54], [54, 54, 'd', 53, 58], [55, 57, 'd'],
    [54, 57, 'u'], [54, 54, 'd', 52, 55], [57, 64, 'h', 57, 66], [58, 58, 'd', 58, 64], [59, 60, 'd'],
    [56, 60, 'u'], [48, 54, 'u'], [48, 56, 'd'], [57, 59, 'd'], [57, 59, 'u'],
    [59, 62, 'd'], [62, 63, 'd'], [63, 64, 'u'], [62, 63, 'u'], [43, 48, 'u'],
    [42, 43, 'u'], [42, 44, 'd'], [40, 44, 'u'], [31, 36, 'u'], [31, 34, 'd'],
    [34, 40, 'd'], [40, 41, 'd'], [34, 37, 'u'], [30, 34, 'u'], [27, 30, 'u'],
    [23, 27, 'u'], [25, 25, 'd', 22, 29], [18, 26, 'u'], [17, 19, 'u'], [17, 18, 'd'],
    [19, 21, 'd'], [16, 22, 'u'], [16, 18, 'd', 11, 19], [16, 18, 'u'], [22, 27, 'd'],
    [24, 27, 'u'], [22, 24, 'u', 17, 26], [21, 24, 'd'], [24, 24, 'u', 23, 26], [23, 23, 'd', 20, 25],
    [22, 25, 'u'], [21, 21, 'u', 20, 22], [26, 34, 'd'], [34, 35, 'u'], [32, 36, 'd'],
    [36, 36, 'u', 34, 37], [44, 55, 'd'], [53, 55, 'u'], [53, 58, 'd'], [58, 58, 'u', 56, 60],
];
const forecastHigh = [
    110, 108, 107, 106, 96, 100, 102, 101, 102, 92, 94, 90, 91, 102, 105, 100, 100, 98, 101, 98,
    106, 108, 112, 112, 93, 97, 85, 82, 82, 74, 69, 72, 62, 60, 56, 57, 55, 57, 60, 61,
    62, 55, 61, 67, 56, 48, 49, 52, 53, 55, 52, 53, 57, 58, 58, 53, 44, 53, 57, 55,
    59, 61, 61, 60, 35, 39, 42, 38, 26, 31, 38, 40, 30, 27, 23, 19, 24, 15, 16, 17,
    21, 14, 15, 14, 27, 23, 18, 20, 23, 22, 19, 20, 36, 32, 35, 33, 59, 53, 59, 54,
];
const forecastLow = [
    116, 113, 112, 111, 100, 106, 107, 106, 107, 98, 99, 96, 96, 107, 111, 105, 103, 102, 109, 102,
    112, 115, 117, 115, 99, 100, 90, 88, 88, 82, 76, 77, 66, 64, 62, 62, 59, 64, 66, 66,
    67, 60, 71, 75, 62, 54, 54, 56, 58, 59, 55, 56, 61, 63, 63, 59, 48, 60, 63, 61,
    65, 66, 65, 63, 38, 42, 45, 41, 30, 36, 44, 44, 36, 32, 28, 23, 28, 19, 19, 20,
    25, 16, 19, 18, 33, 28, 23, 27, 27, 27, 24, 21, 40, 36, 39, 37, 64, 57, 64, 59,
];

const price = document.getElementById('price');
candles.forEach(([top, bottom, kind, high, low], i) => {
    const x = Math.round(barX(i)) + 0.5;
    const color = kind === 'u' ? '#64788f' : '#ff6a20';
    if (high !== undefined) line(price, `${x},${high} ${x},${low}`, kind === 'u' ? color : '#d07a20');
    if (bottom - top < 2) {
        line(price, `${x - 3},${top + 0.5} ${x + 3},${top + 0.5}`, color, bottom - top + 1);
        return;
    }
    add(price, 'rect', {
        x: x - 3, y: top, width: 6, height: bottom - top,
        fill: kind === 'd' ? color : '#000000', stroke: kind === 'h' ? '#a85018' : color, 'stroke-width': kind === 'd' ? 0 : 1,
    });
});
const toPoints = (values) => values.map((y, i) => `${barX(i)},${y}`).join(' ');
line(price, '0,125 ' + toPoints(forecastHigh), '#a80000');
line(price, '0,128 ' + toPoints(forecastLow), '#1c8c1c');
cursorLine(price, 140);
add(price, 'path', { d: 'M708.5 79l4 5h-2.5v6h-3v-6h-2.5z', fill: '#00ff00' });

// session marks above the dates
for (let x = 2; x < 716; x += 4) {
    if (x > 256 && x < 320) continue;
    const red = (x > 158 && x < 170) || x > 670;
    line(price, red ? `${x},139.5 ${x + 3},142.5` : `${x},142.5 ${x + 3},139.5`, red ? '#b00000' : '#007a00');
}
[77, 163, 212, 287, 494, 691].forEach((x) => add(price, 'path', { d: `M${x - 2} 139h4l-2 2z`, fill: '#0000c0' }));
line(price, '257,142.5 320,142.5', '#a8a800', 1.5);

hline(price, 143.5, '#b8b8b8');
hline(price, 152.5, '#b8b8b8');
[118, 402, 545, 687].forEach((x) => line(price, `${x}.5,144 ${x}.5,152`, '#b0b0b0'));
line(price, '260.5,144 260.5,162', '#b0b0b0');
const dates = [
    ['19', 5], ['20', 33], ['21', 61], ['22', 90], ['25', 119], ['26', 147], ['27', 176], ['28', 204], ['29', 233],
    ['1', 262], ['2', 289], ['3', 318], ['4', 347], ['5', 375], ['8', 403], ['9', 432], ['10', 461], ['11', 489],
    ['12', 518], ['15', 547], ['16', 575], ['17', 603], ['18', 632], ['19', 660], ['22', 689], ['23', 739], ['24', 824],
];
dates.forEach(([day, x]) => add(price, 'text', { x, y: 150.5 }, day));
add(price, 'text', { x: 261.5, y: 160 }, 'August');

const levels = [];
for (let i = 0; i <= 10; i++) if (i !== 4) levels.push([4350 - i * 50, 6 + i * 12.5]);
const priceAxis = axis('price-axis', 140, 3.5, 2.5, levels);
add(priceAxis, 'rect', { x: 2.5, y: 53.5, width: 30, height: 9, fill: '#000000', stroke: '#b8b8b8' });
add(priceAxis, 'text', { x: 31, y: 60.5, class: 'last' }, '4140.420');
add(priceAxis, 'rect', { x: 1, y: 143, width: 29, height: 19, fill: '#eeeeee' });
add(priceAxis, 'circle', { cx: 15, cy: 152, r: 4.5, fill: '#ffe9e9', stroke: '#f04040' });
add(priceAxis, 'path', { d: 'M12.5 155q2.5-3 5 0M12.5 150l1.5 1M17.5 150l-1.5 1', fill: 'none', stroke: '#f04040' });

// color swatches
['#e6e6fa', '#ffd700', '#ffff00', '#696969', '#32cd32', '#ffffe0', '#ff6a20', '#98fb98',
    '#8b0000', '#708c90', '#0000ff', '#009000', '#ff0000', '#000000', '#3880a8', '#90ccdd'].forEach((color) => {
    const swatch = document.createElement('button');
    swatch.style.backgroundColor = color;
    swatch.setAttribute('aria-label', color);
    document.getElementById('palette').appendChild(swatch);
});

// saved chart templates 1 to 6
for (let n = 1; n <= 6; n++) {
    const button = document.createElement('button');
    button.setAttribute('aria-label', 'Template ' + n);
    const icon = add(button, 'svg', { viewBox: '0 0 11 9' });
    add(icon, 'rect', { x: 0.5, y: 0.5, width: 9, height: 8, fill: '#f5f5f5', stroke: '#9fb0bd' });
    line(icon, '1,7 3,4 4,5 6,3', '#c04040');
    add(icon, 'text', { x: 6, y: 7.5 }, n);
    document.getElementById('templates').appendChild(button);
}
```
